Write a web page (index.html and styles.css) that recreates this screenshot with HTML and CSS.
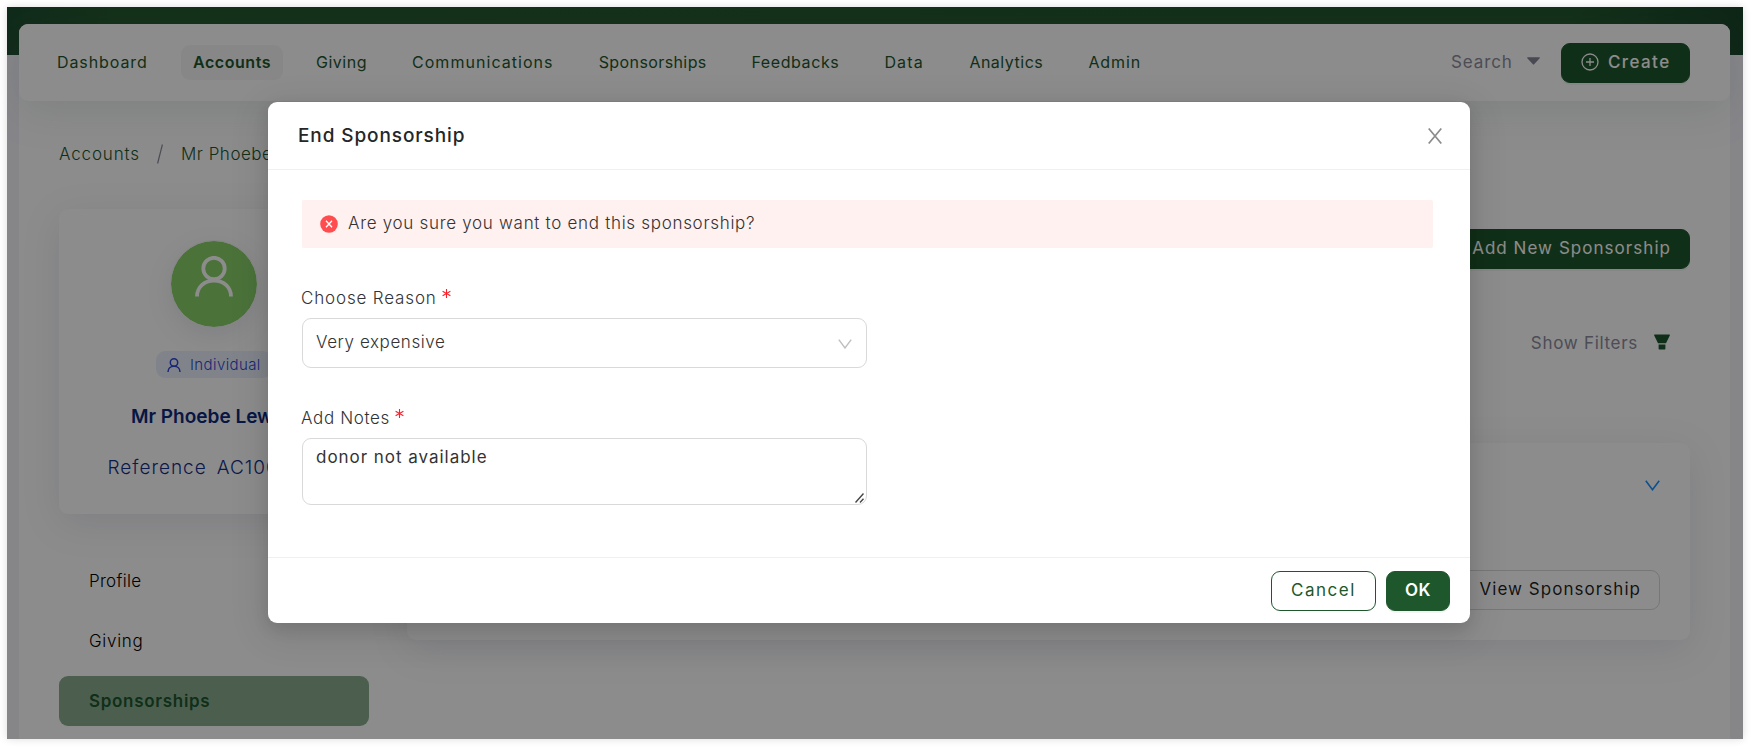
FILE: index.html
```html
<!DOCTYPE html>
<html lang="en">
<head>
<meta charset="utf-8">
<title>End Sponsorship</title>
<link rel="stylesheet" href="styles.css">
</head>
<body>
<div class="frame">
  <div class="page">
    <header class="nav">
      <nav class="nav-links">
        <a class="nav-item dashboard">Dashboard</a>
        <a class="nav-item accounts active">Accounts</a>
        <a class="nav-item giving">Giving</a>
        <a class="nav-item communications">Communications</a>
        <a class="nav-item sponsorships">Sponsorships</a>
        <a class="nav-item feedbacks">Feedbacks</a>
        <a class="nav-item data">Data</a>
        <a class="nav-item analytics">Analytics</a>
        <a class="nav-item admin">Admin</a>
      </nav>
      <div class="nav-right">
        <span class="search">Search</span>
        <svg class="caret" width="13" height="8" viewBox="0 0 13 8"><path d="M.8.3h11.4c.6 0 .8.5.5.9L7.1 7.3a.8.8 0 0 1-1.2 0L.3 1.2C0 .8.2.3.8.3z" fill="#85859a"/></svg>
        <button class="btn primary create">
          <svg width="18" height="18" viewBox="0 0 18 18" fill="none" stroke="#fff" stroke-width="1.3"><circle cx="9" cy="9" r="8"/><path d="M9 5v8M5 9h8"/></svg>
          <span>Create</span>
        </button>
      </div>
    </header>
    <div class="crumbs"><span class="crumb-a">Accounts</span><span class="slash"><svg width="6" height="20" viewBox="0 0 6 20"><path d="M5.4.5.6 19.5" stroke="#8c8c9d" stroke-width="1.2"/></svg></span><span class="crumb-b">Mr Phoebe</span></div>
    <div class="columns">
      <aside class="side">
        <section class="card profile">
          <div class="avatar"><svg width="38" height="41" viewBox="0 0 38 41" fill="none" stroke="#fff" stroke-width="3.8"><circle cx="19" cy="12.5" r="10.7"/><path d="M2 40.500C2 31.500 9 24.600 19 24.600S36 31.500 36 40.500"/></svg></div>
          <div class="tag"><svg width="14" height="14" viewBox="0 0 14 14" fill="none" stroke="#2f45d8" stroke-width="1.5"><circle cx="7" cy="4.500" r="3.700"/><path d="M1 14c0-3.300 2.500-5.700 6-5.700s6 2.400 6 5.700"/></svg><span>Individual</span></div>
          <div class="name">Mr Phoebe Lew</div>
          <div class="ref"><span>Reference</span><span>AC100</span></div>
        </section>
        <ul class="menu">
          <li>Profile</li>
          <li class="m-giving">Giving</li>
          <li class="current">Sponsorships</li>
        </ul>
      </aside>
      <main class="main">
        <button class="btn primary add">Add New Sponsorship</button>
        <div class="filters"><span>Show Filters</span><svg width="16" height="16" viewBox="0 0 16 16" fill="#1e572f"><path d="M.6.5h14.800c.4 0 .7.400.5.700L12 9.300H4L.1 1.200C-.1.900.2.500.6.500zM4.600 10.600h6.800v4.200a.7.7 0 0 1-.7.700H5.300a.7.7 0 0 1-.7-.7z"/></svg></div>
        <section class="card detail">
          <svg width="15" height="11" viewBox="0 0 15 11" fill="none" stroke="#1890ff" stroke-width="1.600"><path d="M.8.800 7.500 9.700 14.200.800"/></svg>
          <button class="btn view">View Sponsorship</button>
        </section>
      </main>
    </div>
  </div>
  <div class="overlay"></div>
  <div class="modal">
    <div class="modal-head">
      <h1>End Sponsorship</h1>
      <svg width="14" height="16" viewBox="0 0 14 16" fill="none" stroke="#8c8c8c" stroke-width="1.700"><path d="M.7.500 13.300 15.500M13.300.500.7 15.500"/></svg>
    </div>
    <div class="modal-body">
      <div class="alert">
        <svg width="18" height="18" viewBox="0 0 18 18"><circle cx="9" cy="9" r="8.800" fill="#ff4d4f"/><path d="M6 5.700 12 12.300M12 5.700 6 12.300" stroke="#fff" stroke-width="1.300"/></svg>
        <span>Are you sure you want to end this sponsorship?</span>
      </div>
      <div class="label reason">Choose Reason<svg class="star" width="9" height="9" viewBox="0 0 9 9"><path d="M4.500 0v9M.6 2.200l7.800 4.600M8.400 2.200.6 6.800" stroke="#f5222d" stroke-width="1.100"/></svg></div>
      <div class="select"><span>Very expensive</span><svg width="14" height="10" viewBox="0 0 14 10" fill="none" stroke="#bfbfbf" stroke-width="1.400"><path d="M.8.600 7 9 13.200.600"/></svg></div>
      <div class="label notes">Add Notes<svg class="star" width="9" height="9" viewBox="0 0 9 9"><path d="M4.500 0v9M.6 2.200l7.800 4.600M8.400 2.200.6 6.800" stroke="#f5222d" stroke-width="1.100"/></svg></div>
      <div class="textarea"><span>donor not available</span><svg class="grip" width="9" height="10" viewBox="0 0 9 10" stroke="#444" stroke-width="1.400"><path d="M.5 9.500 8.500.500M5 9.500 8.500 5.800"/></svg></div>
    </div>
    <div class="modal-foot">
      <button class="btn cancel">Cancel</button>
      <button class="btn primary ok">OK</button>
    </div>
  </div>
</div>
</body>
</html>
```
FILE: styles.css
```css
* { box-sizing: border-box; }
body { margin: 0; height: 747px; overflow: hidden; background: #fff; padding: 7px 8px 8px 7px; font-family: Inter, sans-serif; font-size: 17px; }
.frame { position: relative; height: 732px; overflow: hidden; background: linear-gradient(90deg, #1e4e31, #24592f 6%, #22582f 90%, #1a4529) 0 0 / 100% 48px no-repeat, #f4f4fa; }
body::before { content: ""; position: absolute; left: 7px; top: 7px; width: 1736px; height: 732px; box-shadow: 0 0 8px rgba(0, 0, 0, .14); }
.page { margin: 17px 13px 0 12px; height: 715px; background: #fff; border-radius: 9px 9px 0 0; }
.nav { height: 77px; border-radius: 9px; background: #fff; box-shadow: 0 12px 40px rgba(82, 102, 105, .13); display: flex; justify-content: space-between; align-items: center; padding: 0 40px 1px 26px; }
.nav-links { display: flex; gap: 21.500px; }
.nav-item { box-sizing: content-box; padding: 0 12px; height: 35px; line-height: 35px; border-radius: 9px; font-size: 16px; color: #1e572f; white-space: nowrap; }
.nav-item.active { background: #f6f6f7; font-weight: 600; }
.dashboard { width: 90.500px; letter-spacing: .9px; }
.accounts { width: 77.500px; letter-spacing: .55px; }
.giving { width: 50.500px; letter-spacing: .5px; }
.communications { width: 141.200px; letter-spacing: 1.040px; }
.sponsorships { width: 107.200px; letter-spacing: .4px; }
.feedbacks { width: 87.500px; letter-spacing: .6px; }
.data { width: 39.500px; letter-spacing: 1.200px; }
.analytics { width: 73.500px; letter-spacing: .5px; }
.admin { letter-spacing: .9px; }
.nav-right { display: flex; align-items: center; }
.search { width: 76px; letter-spacing: .9px; color: #8c8c9d; }
.caret { margin-top: -3px; }
.btn { font: 400 17px Inter, sans-serif; height: 40px; border-radius: 9px; border: 1px solid #d9d9d9; background: #fff; padding: 0; white-space: nowrap; display: flex; align-items: center; }
.primary { background: #1e572c; border-color: #1e572c; color: #fff; box-shadow: 0 2px 0 rgba(0, 0, 0, .04); }
.create { width: 129px; margin: 2px 0 0 21px; padding: 0 0 3px 19px; gap: 9px; font-weight: 500; letter-spacing: 1.400px; }
.crumbs { display: flex; align-items: center; height: 24px; margin: 41px 0 0 40px; font-weight: 300; color: #1e572f; white-space: nowrap; }
.crumb-a { letter-spacing: .85px; width: 98px; }
.slash { display: flex; width: 24px; }
.crumb-b { letter-spacing: .5px; }
.columns { display: flex; gap: 38px; padding: 43px 40px 0 40px; }
.side { width: 310px; }
.card { border-radius: 9px; background: #fff; box-shadow: 0 9px 38px rgba(82, 92, 125, .14); }
.profile { height: 305px; display: flex; flex-direction: column; align-items: center; padding-top: 31px; }
.avatar { width: 88px; height: 88px; margin-right: 1px; border: 1px solid #f2f2f2; border-radius: 50%; background: #87d068; background-clip: padding-box; box-shadow: 0 8px 26px rgba(82, 92, 125, .12); display: flex; justify-content: center; padding-top: 15px; }
.tag { width: 116px; height: 27px; margin-top: 23px; border-radius: 9px; background: #eaf1fb; display: flex; align-items: center; padding-left: 11px; gap: 9px; font-size: 15px; font-weight: 300; letter-spacing: .4px; color: #2f45d8; }
.name { width: 166px; margin-top: 27px; line-height: 24px; font-size: 19px; font-weight: 600; color: #0d2a7c; white-space: nowrap; }
.ref { width: 213px; margin-top: 27px; line-height: 24px; display: flex; gap: 10px; font-size: 19px; font-weight: 300; letter-spacing: 1px; color: #14318a; }
.menu { list-style: none; margin: 42px 0 0; padding: 0; display: flex; flex-direction: column; gap: 10px; }
.menu li { height: 50px; line-height: 50px; padding-left: 30px; font-weight: 300; letter-spacing: .3px; border-radius: 9px; }
.menu .m-giving { letter-spacing: .7px; }
.menu .current { background: #8aae91; color: #1e572f; font-weight: 600; letter-spacing: .7px; }
.main { flex: 1; display: flex; flex-direction: column; align-items: flex-end; }
.add { width: 240px; margin-top: 20px; padding: 0 18px 3px 0; justify-content: flex-end; letter-spacing: 1.040px; }
.filters { display: flex; align-items: center; margin: 62px 20px 0 0; height: 24px; gap: 16px; color: #8c8c9d; letter-spacing: .7px; }
.filters svg { margin-top: -2px; }
.detail { width: 100%; height: 197px; margin-top: 88px; padding: 37px 30px 30px; display: flex; flex-direction: column; justify-content: space-between; align-items: flex-end; }
.view { width: 205px; padding: 0 18px 3px 0; justify-content: flex-end; letter-spacing: 1.040px; color: rgba(0, 0, 0, .88); }
.overlay { position: absolute; inset: 0; background: rgba(0, 0, 0, .45); }
.modal { position: absolute; left: 261px; top: 95px; width: 1202px; height: 521px; border-radius: 9px; background: #fff; box-shadow: 0 6px 16px rgba(0, 0, 0, .1), 0 9px 36px 6px rgba(0, 0, 0, .09); display: flex; flex-direction: column; color: #333; }
.modal-head { height: 68px; border-bottom: 1px solid #f0f0f0; display: flex; justify-content: space-between; align-items: center; padding: 0 28px 0 30px; }
.modal-head h1 { margin: 0; font-size: 19px; font-weight: 500; letter-spacing: .9px; color: #262626; }
.modal-body { flex: 1; padding: 30px 37px 0 34px; font-weight: 300; }
.alert { height: 48px; border-radius: 2px; background: #fff1f0; display: flex; align-items: center; padding: 0 0 1px 18px; gap: 10px; letter-spacing: .7px; }
.alert span { margin-top: -2px; }
.label { height: 24px; line-height: 24px; display: flex; margin-left: -1px; }
.reason { margin-top: 38px; letter-spacing: .84px; }
.notes { margin-top: 38px; letter-spacing: .65px; }
.star { margin: 3px 0 0 5px; }
.select { width: 565px; height: 50px; margin-top: 8px; border: 1px solid #d9d9d9; border-radius: 9px; display: flex; justify-content: space-between; align-items: center; padding: 0 14px 0 13px; letter-spacing: .58px; }
.select span { margin-top: -3px; }
.select svg { margin-top: 2px; }
.textarea { position: relative; width: 565px; height: 67px; margin-top: 8px; border: 1px solid #d9d9d9; border-radius: 9px; padding: 6px 13px; line-height: 24px; font-weight: 400; letter-spacing: .97px; }
.grip { position: absolute; right: 2px; bottom: 1px; }
.modal-foot { height: 66px; border-top: 1px solid #f0f0f0; display: flex; justify-content: flex-end; gap: 10px; padding: 13px 20px 0; }
.cancel { width: 105px; padding: 0 0 2px 19px; border-color: #1e572c; color: #1e572c; letter-spacing: 1.500px; }
.ok { width: 64px; padding: 0 0 2px 18px; font-weight: 600; letter-spacing: .5px; }
```
